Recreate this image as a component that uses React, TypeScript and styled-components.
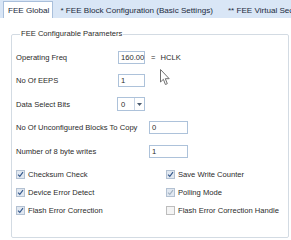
import React from 'react'
import styled, { createGlobalStyle } from 'styled-components'

const GlobalStyle = createGlobalStyle`
  html, body {
    margin: 0;
    padding: 0;
    background: #ffffff;
  }
  body {
    font-family: "Liberation Sans", Arial, sans-serif;
    font-size: 7.6px;
    color: #2b2b2b;
  }
`

interface ITab {
  label: string
  active?: boolean
}

const tabs: ITab[] = [
  { label: 'FEE Global', active: true },
  { label: '* FEE Block Configuration (Basic Settings)' },
  { label: '** FEE Virtual Sector Configuration' },
]

interface IField {
  label: string
  value: string
  wide?: boolean
  combo?: boolean
  suffix?: boolean
  caret?: boolean
}

const fields: IField[] = [
  { label: 'Operating Freq', value: '160.00', suffix: true, caret: true },
  { label: 'No Of EEPS', value: '1' },
  { label: 'Data Select Bits', value: '0', combo: true },
  { label: 'No Of Unconfigured Blocks To Copy', value: '0', wide: true },
  { label: 'Number of 8 byte writes', value: '1', wide: true },
]

type CheckState = 'on' | 'dim' | 'off'

const checks: { label: string; state: CheckState }[] = [
  { label: 'Checksum Check', state: 'on' },
  { label: 'Save Write Counter', state: 'on' },
  { label: 'Device Error Detect', state: 'on' },
  { label: 'Polling Mode', state: 'dim' },
  { label: 'Flash Error Correction', state: 'on' },
  { label: 'Flash Error Correction Handle', state: 'off' },
]

function CheckBox(props: { state: CheckState }) {
  const { state } = props
  return (
    <Box $state={state}>
      {state !== 'off' &&
        <svg width="7" height="7" viewBox="0 0 7 7">
          <path d="M1 3.6 L2.8 5.4 L6 1.2" fill="none"
            stroke={state === 'on' ? '#34588c' : '#a3b2c2'} strokeWidth="1.1" />
        </svg>}
    </Box>
  )
}

export default function App() {
  return (
    <Page>
      <GlobalStyle />
      <TabStrip>
        {tabs.map((t) =>
          <Tab key={t.label} $active={t.active}>{t.label}</Tab>
        )}
      </TabStrip>
      <Group>
        <Legend>FEE Configurable Parameters</Legend>
        <Fields>
          {fields.map((f) =>
            <FieldRow key={f.label}>
              <Label $wide={f.wide}>{f.label}</Label>
              {f.combo ? (
                <Combo>
                  <span>{f.value}</span>
                  <ComboArrow>
                    <svg width="5" height="3" viewBox="0 0 5 3">
                      <path d="M0 0 H5 L2.5 3 Z" fill="#4a5a6e" />
                    </svg>
                  </ComboArrow>
                </Combo>
              ) : (
                <Input $wide={f.wide}>
                  {f.caret && <Caret />}
                  {f.value}
                </Input>
              )}
              {f.suffix && <Suffix><span>=</span><span>HCLK</span></Suffix>}
            </FieldRow>
          )}
        </Fields>
        <Checks>
          {checks.map((c) =>
            <CheckItem key={c.label}>
              <CheckBox state={c.state} />
              <span>{c.label}</span>
            </CheckItem>
          )}
        </Checks>
        <Pointer width="10" height="17" viewBox="0 0 10 17">
          <path d="M0.5 0.5 L0.5 13 L3.4 10.3 L5.4 15.5 L7.3 14.7 L5.3 9.7 L9.2 9.7 Z"
            fill="#ffffff" stroke="#6f6f6f" strokeWidth="1" strokeLinejoin="round" />
        </Pointer>
      </Group>
    </Page>
  )
}

const Page = styled.div`
  width: 291px;
  height: 240px;
  overflow: hidden;
  background: #ffffff;
`
const TabStrip = styled.div`
  display: flex;
  align-items: flex-end;
  height: 18px;
  padding-left: 3px;
  background: #d9e6f6;
  white-space: nowrap;
  overflow: hidden;
  font-size: 8.1px;
`
const Tab = styled.div<{ $active?: boolean }>`
  flex-shrink: 0;
  display: flex;
  align-items: center;
  height: ${(p) => (p.$active ? '17px' : '16px')};
  padding: ${(p) => (p.$active ? '0 3px 0 4px' : '0 7px 0 6px')};
  box-sizing: border-box;
  background: ${(p) => (p.$active ? '#ffffff' : 'transparent')};
  border: 1px solid ${(p) => (p.$active ? '#a9bfdb' : 'transparent')};
  border-bottom: 0;
  color: #1c2a3c;
`
const Group = styled.fieldset`
  position: relative;
  box-sizing: border-box;
  width: 278px;
  height: 209px;
  margin: 11px 0 0 11px;
  padding: 0 4px;
  border: 1px solid #d3dbe3;
  border-radius: 2px;
`
const Legend = styled.legend`
  padding: 0 1px;
  margin-left: 4px;
  line-height: 10px;
`
const Fields = styled.div`
  display: flex;
  flex-direction: column;
  gap: 9.5px;
  margin-top: 11px;
`
const FieldRow = styled.div`
  display: flex;
  align-items: center;
  height: 14px;
`
const Label = styled.div<{ $wide?: boolean }>`
  width: ${(p) => (p.$wide ? '133px' : '102px')};
  flex-shrink: 0;
`
const Input = styled.div<{ $wide?: boolean }>`
  box-sizing: border-box;
  width: ${(p) => (p.$wide ? '39px' : '27px')};
  height: 13px;
  padding-left: 2px;
  display: flex;
  align-items: center;
  border: 1px solid #adc2da;
  background: #ffffff;
`
const Caret = styled.span`
  width: 1px;
  height: 9px;
  margin: 0 1px 0 -1px;
  background: #1a1a1a;
`
const Combo = styled.div`
  box-sizing: border-box;
  width: 28px;
  height: 14px;
  margin-left: -1px;
  display: flex;
  align-items: center;
  justify-content: space-between;
  padding-left: 3px;
  border: 1px solid #adc2da;
  background: #ffffff;
`
const ComboArrow = styled.div`
  display: flex;
  align-items: center;
  justify-content: center;
  width: 9px;
  height: 100%;
  border-left: 1px solid #c9d6e6;
`
const Suffix = styled.div`
  display: flex;
  gap: 5px;
  margin-left: 6px;
`
const Checks = styled.div`
  display: grid;
  grid-template-columns: 150px 1fr;
  row-gap: 8px;
  margin-top: 11px;
`
const CheckItem = styled.div`
  display: flex;
  align-items: center;
  gap: 3px;
  height: 10px;
`
const Box = styled.span<{ $state: CheckState }>`
  box-sizing: border-box;
  display: inline-flex;
  align-items: center;
  justify-content: center;
  width: 9px;
  height: 9px;
  border: 1px solid ${(p) => (p.$state === 'off' ? '#bdbdbd' : '#b3c1d2')};
  background: ${(p) => (p.$state === 'off' ? '#f4f4f4' : '#e1e8f1')};
`
const Pointer = styled.svg`
  position: absolute;
  left: 148px;
  top: 30px;
`
